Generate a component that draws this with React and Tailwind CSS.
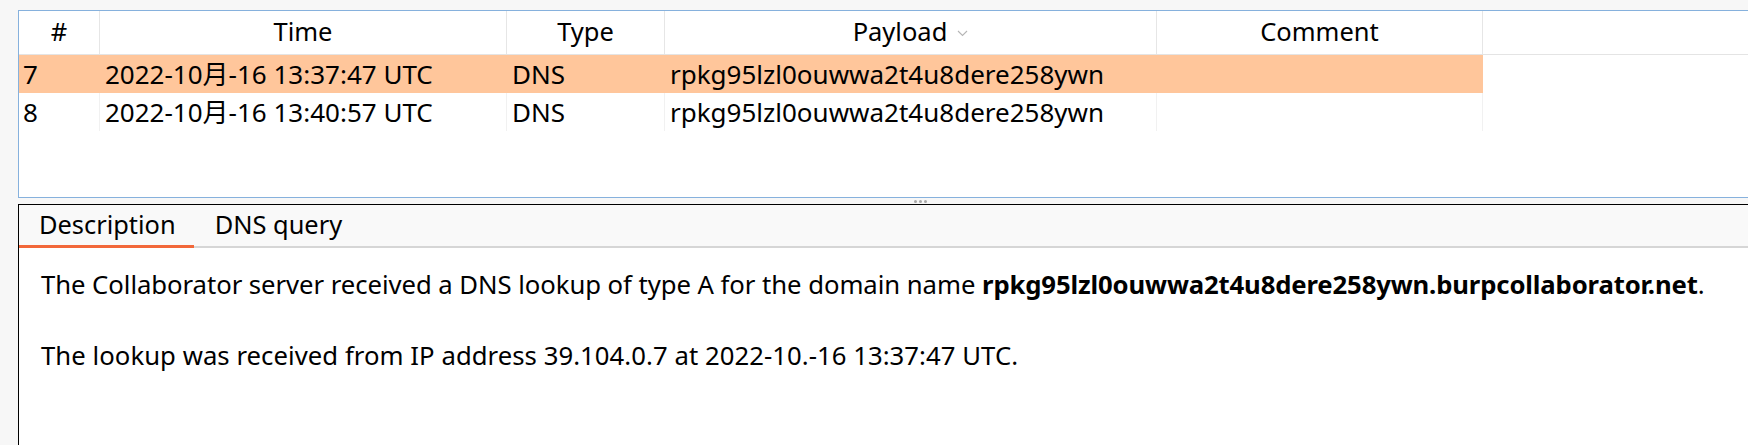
import React from "react";

const cols = [
  { key: "num", label: "#", w: "w-[81px]" },
  { key: "time", label: "Time", w: "w-[407px]" },
  { key: "type", label: "Type", w: "w-[158px]" },
  { key: "payload", label: "Payload", w: "w-[492px]" },
  { key: "comment", label: "Comment", w: "w-[326px]" },
];

const rows = [
  { num: "7", time: "2022-10月-16 13:37:47 UTC", type: "DNS", payload: "rpkg95lzl0ouwwa2t4u8dere258ywn", comment: "", selected: true },
  { num: "8", time: "2022-10月-16 13:40:57 UTC", type: "DNS", payload: "rpkg95lzl0ouwwa2t4u8dere258ywn", comment: "", selected: false },
];

function Chevron() {
  return (
    <svg width="11" height="7" viewBox="0 0 11 7" className="ml-[10px] mt-[3px]">
      <polyline points="1,1 5.5,5.5 10,1" fill="none" stroke="#b5b5b5" strokeWidth="1.1" />
    </svg>
  );
}

export default function App() {
  return (
    <div
      className="w-[1748px] h-[445px] overflow-hidden bg-[#f7f7f7] pt-[10px] pl-[18px] flex flex-col text-black"
      style={{ fontFamily: '"Noto Sans", "Noto Sans CJK SC", sans-serif' }}
    >
      {/* Top table panel */}
      <div className="h-[188px] shrink-0 bg-white border-t border-b border-l border-[#86b1dd] flex flex-col">
        {/* Header */}
        <div className="h-[44px] shrink-0 flex border-b border-[#e4e4e4]">
          {cols.map((c) => (
            <div
              key={c.key}
              className={`${c.w} shrink-0 h-full border-r border-[#e6e6e6] flex items-center justify-center text-[25.5px] leading-[43px] pb-[2px]`}
            >
              <span>{c.label}</span>
              {c.key === "payload" && <Chevron />}
            </div>
          ))}
          <div className="flex-1" />
        </div>
        {/* Rows */}
        {rows.map((r) => (
          <div key={r.num} className="h-[38px] shrink-0 flex">
            {cols.map((c, i) => (
              <div
                key={c.key}
                className={`${c.w} shrink-0 h-full flex items-center text-[26px] leading-[38px] whitespace-nowrap ${
                  i === 0 ? "pl-[4px]" : "pl-[5px]"
                } ${
                  r.selected
                    ? "bg-[#ffc69b] border-r border-[#ffc69b]"
                    : "bg-white border-r border-[#f1f1f1]"
                }`}
              >
                {r[c.key]}
              </div>
            ))}
            <div className="flex-1" />
          </div>
        ))}
      </div>

      {/* Splitter */}
      <div className="h-[6px] shrink-0 flex items-center pl-[896px] gap-[2px]">
        <div className="w-[3px] h-[3px] rounded-full bg-[#a8a8a8]" />
        <div className="w-[3px] h-[3px] rounded-full bg-[#a8a8a8]" />
        <div className="w-[3px] h-[3px] rounded-full bg-[#a8a8a8]" />
      </div>

      {/* Bottom detail panel */}
      <div className="flex-1 bg-white border-t border-l border-black flex flex-col">
        <div className="h-[43px] shrink-0 bg-[#f9f9f9] border-b-2 border-[#d6d6d6] flex">
          <div className="h-[43px] -mb-[2px] pl-[20px] pr-[18px] border-b-[3px] border-[#f2683a] text-[25.4px] leading-[38px]">
            Description
          </div>
          <div className="h-[41px] pl-[21px] pr-[18px] text-[25.4px] leading-[38px]">DNS query</div>
        </div>
        <div className="pl-[22px] pt-[20px] text-[25.7px] leading-[34px]">
          <p className="whitespace-nowrap">
            <span className="tracking-[-0.05px]">
              The Collaborator server received a DNS lookup of type A for the domain name
            </span>{" "}
            <span className="font-bold tracking-[-0.14px]">
              rpkg95lzl0ouwwa2t4u8dere258ywn.burpcollaborator.net
            </span>
            .
          </p>
          <p className="mt-[37px] whitespace-nowrap tracking-[0.05px]">
            The lookup was received from IP address 39.104.0.7 at 2022-10.-16 13:37:47 UTC.
          </p>
        </div>
      </div>
    </div>
  );
}
